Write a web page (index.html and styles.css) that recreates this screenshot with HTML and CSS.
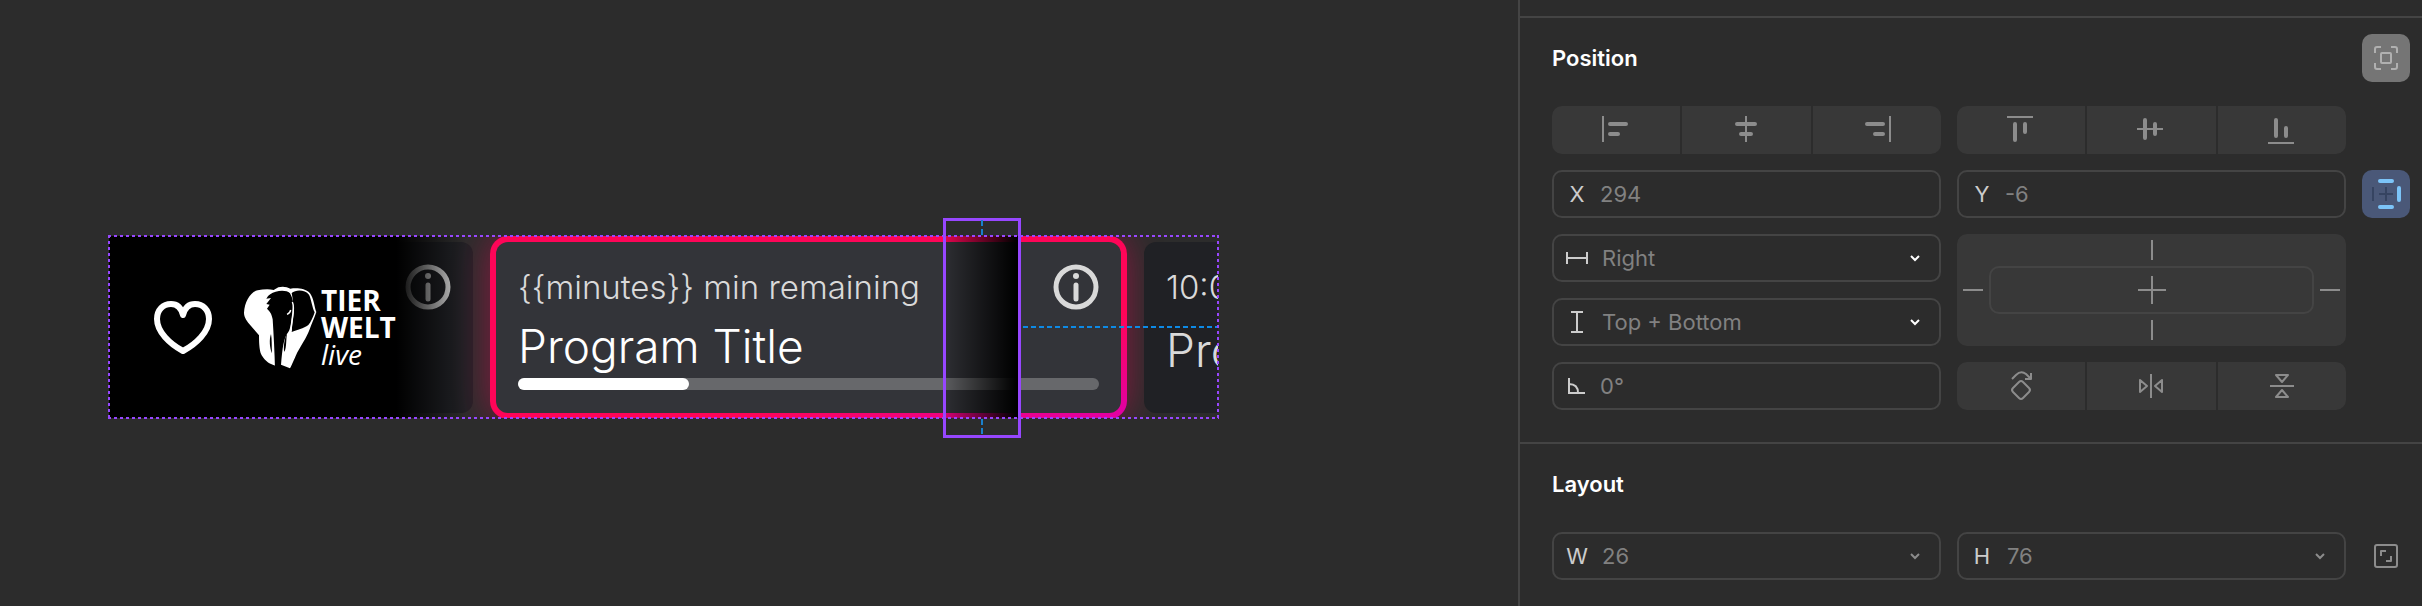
FILE: index.html
```html
<!DOCTYPE html>
<html lang="en">
<head>
  <meta charset="UTF-8">
  <meta name="viewport" content="width=device-width, initial-scale=1.0">
  <title>Design Editor</title>
  <link rel="stylesheet" href="styles.css">
</head>
<body>
  <main class="canvas">
    <div class="frame">
      <div class="guide">
        <div class="channel">
          <svg class="heart" width="60" height="56" viewBox="0 0 60 56" fill="none" stroke="#fff" stroke-width="6" stroke-linejoin="round" stroke-linecap="round">
            <path d="M30 16C28 8 23 5 18 5C10 5 4 11 4 20C4 33 17 45 30 52C43 45 56 33 56 20C56 11 50 5 42 5C37 5 32 8 30 16Z"/>
          </svg>
          <div class="logo">
            <svg width="80" height="90" viewBox="0 0 240 270">
              <path fill="#fff" d="M50 25C28 30 11 60 9 92C9 106 18 118 30 132L54 160C54 190 56 210 62 220C74 240 88 247 103 251L120 248L147 259C152 250 156 240 164 222C176 196 198 166 206 142C212 124 220 108 226 90C220 76 219 50 207 34C192 18 168 18 148 20C138 14 124 12 112 16L98 24C82 20 66 22 50 25Z"/>
              <path d="M76 50C82 38 92 32 104 29C120 25 138 25 147 34C152 44 157 54 156 66L154 92C150 116 150 138 142 150C128 166 124 200 120 249L118 262L102 262C101 215 98 160 95 112C92 96 88 90 78 80L86 68L76 66L90 48Z"/>
              <path d="M152 33C164 22 192 22 204 38C211 52 213 74 221 91C216 106 210 120 202 129C188 140 168 144 152 150C153 120 164 90 152 33Z"/>
              <path fill="none" stroke="#fff" stroke-width="4" d="M154 60C164 84 152 104 150 148M149 84Q147 94 138 97"/>
              <path d="M90 156C84 172 86 198 93 214C92 192 93 172 90 156ZM139 150C132 166 126 192 130 210C138 194 134 172 139 150Z"/>
            </svg>
            <p class="logo-text"><strong>TIER<br>WELT</strong><em>live</em></p>
          </div>
        </div>
        <div class="programs">
          <article class="card card-past">
            <div class="meta">
              <svg class="info" width="46" height="46" viewBox="0 0 46 46"><circle cx="23" cy="23" r="20" fill="none" stroke="currentColor" stroke-width="5"/><circle cx="23" cy="12" r="3" fill="currentColor"/><path d="M23 21V35" stroke="currentColor" stroke-width="5" stroke-linecap="round"/></svg>
            </div>
          </article>
          <article class="card card-active">
            <div class="meta">
              <span>{{minutes}} min remaining</span>
              <svg class="info" width="46" height="46" viewBox="0 0 46 46"><circle cx="23" cy="23" r="20" fill="none" stroke="currentColor" stroke-width="5"/><circle cx="23" cy="12" r="3" fill="currentColor"/><path d="M23 21V35" stroke="currentColor" stroke-width="5" stroke-linecap="round"/></svg>
            </div>
            <h3>Program Title</h3>
            <div class="progress"><div class="progress-bar"></div></div>
          </article>
          <article class="card card-next">
            <div class="meta"><span>10:00 - 10:30</span></div>
            <h3>Program Title</h3>
          </article>
        </div>
        <div class="fade"></div>
      </div>
    </div>
    <div class="selection"></div>
    <div class="pin pin-top"></div>
    <div class="pin pin-bottom"></div>
    <div class="pin-right"></div>
  </main>

  <aside class="panel">
    <section class="section">
      <header class="section-header">
        <h2>Position</h2>
        <button class="icon-btn icon-btn-grey" type="button" aria-label="Absolute position">
          <svg viewBox="0 0 48 48"><path d="M13 19V15Q13 13 15 13H19M29 13H33Q35 13 35 15V19M35 29V33Q35 35 33 35H29M19 35H15Q13 35 13 33V29"/><rect x="19" y="19" width="10" height="10" rx="1"/></svg>
        </button>
      </header>
      <div class="grid">
        <div class="segment">
          <button type="button" aria-label="Align left"><svg viewBox="0 0 48 48"><path d="M11 10V36"/><path class="bar" d="M18 18H34M18 28H26"/></svg></button>
          <button type="button" aria-label="Align horizontal centers"><svg viewBox="0 0 48 48"><path d="M24 10V36"/><path class="bar" d="M15 18H33M19 28H29"/></svg></button>
          <button type="button" aria-label="Align right"><svg viewBox="0 0 48 48"><path d="M37 10V36"/><path class="bar" d="M14 18H30M22 28H30"/></svg></button>
        </div>
        <div class="segment">
          <button type="button" aria-label="Align top"><svg viewBox="0 0 48 48"><path d="M10 11H36"/><path class="bar" d="M18 18V34M28 18V26"/></svg></button>
          <button type="button" aria-label="Align vertical centers"><svg viewBox="0 0 48 48"><path d="M10 23H36"/><path class="bar" d="M18 14V32M28 18V28"/></svg></button>
          <button type="button" aria-label="Align bottom"><svg viewBox="0 0 48 48"><path d="M10 37H36"/><path class="bar" d="M18 14V30M28 22V30"/></svg></button>
        </div>

        <label class="field first">
          <span class="field-icon">X</span>
          <input type="text" value="294">
        </label>
        <label class="field">
          <span class="field-icon">Y</span>
          <input type="text" value="-6">
        </label>
        <button class="icon-btn icon-btn-blue" type="button" aria-label="Constraints">
          <svg viewBox="0 0 48 48"><path class="dark" d="M11 17V31M17 24H31M24 17V31"/><path class="bar" d="M18 11H30M18 37H30M37 18V30"/></svg>
        </button>

        <label class="field first">
          <span class="field-icon"><svg width="24" height="24" viewBox="0 0 24 24"><path d="M2 6V18M22 6V18M2 12H22"/></svg></span>
          <select aria-label="Horizontal constraint"><option>Right</option></select>
          <svg class="chevron" width="12" height="8" viewBox="0 0 12 8"><path d="M2 2L6 6L10 2"/></svg>
        </label>
        <div class="constraints">
          <i class="tick tick-v"></i>
          <i class="tick tick-h"></i>
          <div class="constraints-box">
            <svg width="28" height="28" viewBox="0 0 28 28"><path d="M14 0V28M0 14H28"/></svg>
          </div>
          <i class="tick tick-h"></i>
          <i class="tick tick-v"></i>
        </div>

        <label class="field first">
          <span class="field-icon"><svg width="24" height="24" viewBox="0 0 24 24"><path d="M6 2H18M6 22H18M12 2V22"/></svg></span>
          <select aria-label="Vertical constraint"><option>Top + Bottom</option></select>
          <svg class="chevron" width="12" height="8" viewBox="0 0 12 8"><path d="M2 2L6 6L10 2"/></svg>
        </label>

        <label class="field first">
          <span class="field-icon"><svg width="24" height="24" viewBox="0 0 24 24"><path d="M4 4V19H20M4 10Q13 10 13 19"/></svg></span>
          <input type="text" value="0°" aria-label="Rotation">
        </label>
        <div class="segment">
          <button type="button" aria-label="Rotate 90"><svg viewBox="0 0 48 48"><path d="M15 17L19 13Q24 8 29 12L34 17M34 11V17H28"/><path d="M22 20Q24 18 26 20L32 26Q34 28 32 30L26 36Q24 38 22 36L16 30Q14 28 16 26Z"/></svg></button>
          <button type="button" aria-label="Flip horizontal"><svg viewBox="0 0 48 48"><path d="M24 12V36M13 18V30L20 24ZM35 18V30L28 24Z"/></svg></button>
          <button type="button" aria-label="Flip vertical"><svg viewBox="0 0 48 48"><path d="M12 24H36M18 13H30L24 20ZM18 35H30L24 28Z"/></svg></button>
        </div>
      </div>
    </section>

    <section class="section">
      <header class="section-header">
        <h2>Layout</h2>
      </header>
      <div class="grid">
        <label class="field first">
          <span class="field-icon">W</span>
          <input class="sized" type="text" value="26">
          <svg class="chevron muted" width="12" height="8" viewBox="0 0 12 8"><path d="M2 2L6 6L10 2"/></svg>
        </label>
        <label class="field">
          <span class="field-icon">H</span>
          <input class="sized" type="text" value="76">
          <svg class="chevron muted" width="12" height="8" viewBox="0 0 12 8"><path d="M2 2L6 6L10 2"/></svg>
        </label>
        <button class="icon-btn" type="button" aria-label="Resize to fit">
          <svg viewBox="0 0 48 48"><rect x="13" y="13" width="22" height="22" rx="2"/><path d="M19 24V19H24M24 29H29V24"/></svg>
        </button>
      </div>
    </section>
  </aside>
</body>
</html>
```
FILE: styles.css
```css
* {
  margin: 0;
  padding: 0;
  box-sizing: border-box;
}

body {
  display: flex;
  min-height: 100vh;
  background: #2c2c2c;
  font-family: Inter, sans-serif;
  font-size: 22px;
  color: #fff;
  overflow: hidden;
}

button,
input,
select {
  font: inherit;
  border: none;
  background: none;
}

svg {
  display: block;
}

/* Canvas */
.canvas {
  flex: 1;
  position: relative;
  overflow: hidden;
}

.frame {
  position: absolute;
  left: 108px;
  top: 235px;
  width: 1111px;
  height: 184px;
  padding: 1px;
}

/* dotted component outline */
.frame::after {
  content: "";
  position: absolute;
  inset: 0;
  background:
    repeating-linear-gradient(90deg, #9747ff 0 3px, transparent 3px 6px) top / 100% 2px no-repeat,
    repeating-linear-gradient(90deg, #9747ff 0 3px, transparent 3px 6px) bottom / 100% 2px no-repeat,
    repeating-linear-gradient(#9747ff 0 3px, transparent 3px 6px) left / 2px 100% no-repeat,
    repeating-linear-gradient(#9747ff 0 3px, transparent 3px 6px) right / 2px 100% no-repeat;
}

.guide {
  position: relative;
  isolation: isolate;
  display: flex;
  height: 100%;
  overflow: hidden;
}

.channel {
  flex: none;
  position: relative;
  z-index: 2;
  display: flex;
  align-items: center;
  gap: 28px;
  width: 364px;
  padding-left: 44px;
  background: linear-gradient(90deg, #000 79%, transparent 98%);
}

.logo {
  display: flex;
  align-items: center;
}

.logo-text {
  font-family: "Open Sans", sans-serif;
  font-size: 28px;
  line-height: 27px;
}

.logo-text em {
  display: block;
}

.programs {
  flex: none;
  display: flex;
  gap: 23px;
  margin-left: -364px;
  padding: 6px 0 5px;
}

.card {
  flex: none;
  width: 625px;
  padding: 22px;
  border-radius: 12px;
  background: #202125;
  color: #d9d9d9;
}

.card-past {
  width: 364px;
}

.card-past .meta {
  justify-content: flex-end;
}

.card-next {
  position: relative;
  z-index: 1;
}

.card-active {
  position: relative;
  z-index: 1;
  width: 637px;
  margin: -6px;
  border: 6px solid transparent;
  border-radius: 18px;
  background:
    linear-gradient(#333439, #333439) padding-box,
    linear-gradient(165deg, #ff0558 70%, #e000a8) border-box;
  box-shadow: 0 0 36px rgba(255, 0, 90, 0.45);
}

.meta {
  display: flex;
  align-items: center;
  justify-content: space-between;
  height: 46px;
  font-size: 33px;
  font-weight: 300;
  white-space: nowrap;
}

.card h3 {
  margin: 12px 0 4px;
  font-size: 46px;
  font-weight: 300;
  line-height: 56px;
  white-space: nowrap;
}

.card-active h3 {
  margin-top: 8px;
  color: #fff;
}

.progress {
  height: 12px;
  border-radius: 6px;
  background: #67686b;
}

.progress-bar {
  width: 171px;
  height: 100%;
  border-radius: 6px;
  background: #fff;
}

.fade {
  position: absolute;
  z-index: 3;
  left: 835px;
  top: 0;
  width: 75px;
  height: 100%;
  background: linear-gradient(90deg, rgba(0, 0, 0, 0.1), #000 96%);
}

.selection {
  position: absolute;
  left: 943px;
  top: 218px;
  width: 78px;
  height: 220px;
  border: 3px solid #9747ff;
}

.pin {
  position: absolute;
  left: 981px;
  width: 2px;
  height: 16px;
  background: repeating-linear-gradient(#1a80cc 0 6px, transparent 6px 9px);
}

.pin-top {
  top: 220px;
}

.pin-bottom {
  top: 419px;
}

.pin-right {
  position: absolute;
  left: 1023px;
  top: 326px;
  width: 194px;
  height: 2px;
  background: repeating-linear-gradient(90deg, #0d8ae6 0 5px, transparent 5px 8px);
}

/* Properties panel */
.panel {
  flex: none;
  width: 904px;
  border-left: 2px solid #444;
}

.panel::before {
  content: "";
  display: block;
  height: 16px;
}

.section {
  padding: 16px 12px 32px 32px;
  border-top: 2px solid #444;
}

.section-header {
  display: flex;
  align-items: center;
  justify-content: space-between;
  height: 48px;
  margin-bottom: 24px;
}

.section-header h2 {
  font-size: 22px;
  font-weight: 600;
}

.grid {
  display: grid;
  grid-template-columns: minmax(0, 1fr) minmax(0, 1fr) 48px;
  gap: 16px;
}

.first {
  grid-column: 1;
}

.segment {
  display: flex;
  gap: 2px;
  height: 48px;
  border-radius: 10px;
  overflow: hidden;
}

.segment button {
  flex: 1;
  display: flex;
  justify-content: center;
  background: #383838;
}

.segment svg,
.icon-btn svg {
  width: 48px;
  height: 48px;
  fill: none;
  stroke: #8c8c8c;
  stroke-width: 2;
  stroke-linecap: butt;
  stroke-linejoin: round;
}

svg .bar {
  stroke-width: 4;
  stroke-linecap: round;
}

.icon-btn {
  width: 48px;
  height: 48px;
  border-radius: 10px;
}

.icon-btn-grey {
  background: #757575;
}

.icon-btn-grey svg {
  stroke: #b0b0b0;
}

.icon-btn-blue {
  background: #4a5878;
}

.icon-btn-blue svg {
  stroke: #7cc4f8;
}

.icon-btn-blue .dark {
  stroke: #364461;
}

.field {
  display: flex;
  align-items: center;
  height: 48px;
  border: 2px solid #444;
  border-radius: 10px;
}

.field-icon {
  flex: none;
  display: flex;
  justify-content: center;
  width: 46px;
  color: #ccc;
}

.field-icon svg {
  fill: none;
  stroke: #ccc;
  stroke-width: 2;
}

.field input,
.field select {
  flex: 1;
  min-width: 0;
  color: #818181;
  appearance: none;
  outline: none;
}

.field select,
.field .sized {
  padding-left: 2px;
}

.chevron {
  flex: none;
  margin-right: 18px;
  fill: none;
  stroke: #fff;
  stroke-width: 2;
  pointer-events: none;
}

.chevron.muted {
  stroke: #8c8c8c;
}

.constraints {
  grid-column: 2;
  grid-row: 3 / span 2;
  display: grid;
  grid-template-columns: 20px 1fr 20px;
  grid-template-rows: 20px 48px 20px;
  align-content: center;
  align-items: center;
  gap: 6px;
  padding: 0 6px;
  border-radius: 10px;
  background: #383838;
}

.tick {
  background: #8c8c8c;
}

.tick-h {
  height: 2px;
}

.tick-v {
  grid-column: 1 / -1;
  justify-self: center;
  width: 2px;
  height: 20px;
}

.constraints-box {
  display: flex;
  align-items: center;
  justify-content: center;
  height: 48px;
  border: 2px solid #444;
  border-radius: 10px;
}

.constraints-box svg {
  stroke: #8c8c8c;
  stroke-width: 2;
}
```
